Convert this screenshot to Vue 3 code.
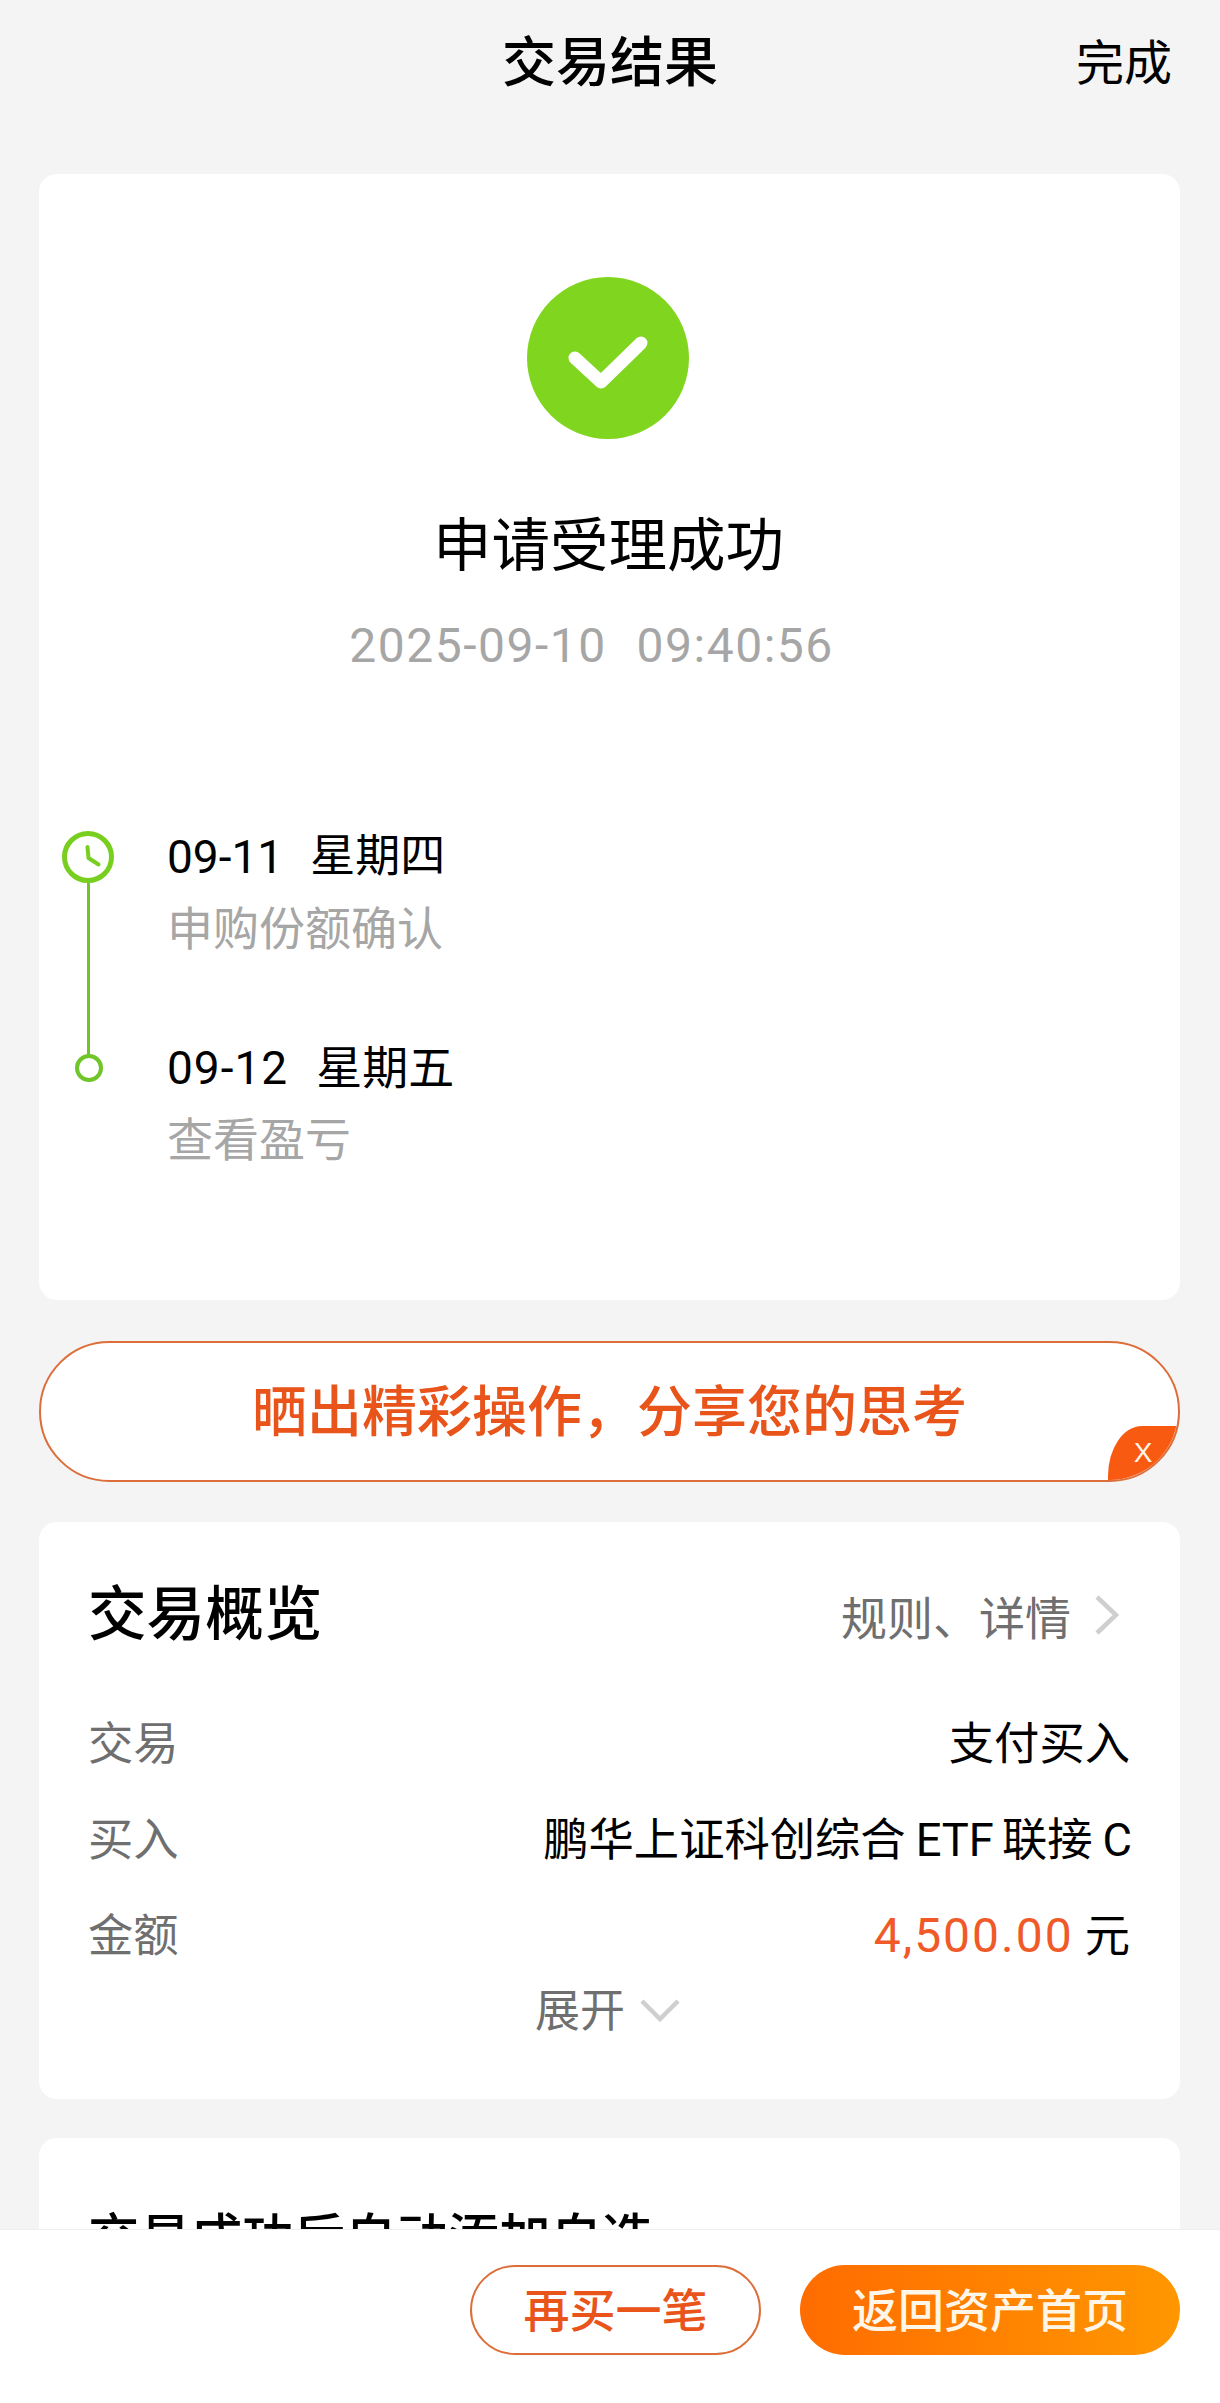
<template>
  <div class="page">
    <div class="scroll">
      <!-- 顶部标题 -->
      <header class="top">
        <h1 class="top-title">交易结果</h1>
        <span class="top-done">完成</span>
      </header>

      <div class="cards">
        <!-- 受理结果 -->
        <section class="card result">
          <svg class="ok-icon" viewBox="0 0 162 162">
            <circle cx="81" cy="81" r="81" fill="#80d51f" />
            <path d="M48 81 L74 105 L114 66" fill="none" stroke="#fff" stroke-width="13" stroke-linecap="round" stroke-linejoin="round" />
          </svg>
          <h2 class="result-title">申请受理成功</h2>
          <div class="result-time"><span>2025-09-10</span><span>09:40:56</span></div>

          <ul class="steps">
            <li v-for="(s, i) in steps" :key="s.date" class="step">
              <div class="marker">
                <div class="dot-wrap">
                  <svg v-if="i === 0" class="clock" viewBox="0 0 52 52">
                    <circle cx="26" cy="26" r="23.5" fill="#fff" stroke="#78cf20" stroke-width="5" />
                    <path d="M25.5 16 L26.5 27 L36.5 33.5" fill="none" stroke="#78cf20" stroke-width="4" stroke-linecap="round" stroke-linejoin="round" />
                  </svg>
                  <span v-else class="dot"></span>
                </div>
                <div v-if="i < steps.length - 1" class="line"></div>
              </div>
              <div class="step-text">
                <div class="step-date"><span class="num">{{ s.date }}</span><span class="week">{{ s.week }}</span></div>
                <div class="step-sub">{{ s.sub }}</div>
              </div>
            </li>
          </ul>
        </section>

        <!-- 分享条 -->
        <div class="share">
          <span class="share-text">晒出精彩操作，分享您的思考</span>
          <span class="share-close">X</span>
        </div>

        <!-- 交易概览 -->
        <section class="card overview">
          <div class="ov-head">
            <h2 class="ov-title">交易概览</h2>
            <div class="ov-link">
              规则、详情
              <svg class="chev-right" viewBox="0 0 27 42">
                <path d="M4 3 L23 21 L4 39" fill="none" stroke="#cfcfcf" stroke-width="4.5" />
              </svg>
            </div>
          </div>
          <div class="ov-rows">
            <div class="ov-row">
              <span class="ov-label">交易</span>
              <span class="ov-value">支付买入</span>
            </div>
            <div class="ov-row">
              <span class="ov-label">买入</span>
              <span class="ov-value">鹏华上证科创综合<i class="latin etf">ETF</i>联接<i class="latin cls">C</i></span>
            </div>
            <div class="ov-row">
              <span class="ov-label">金额</span>
              <span class="ov-value"><em class="amount">4,500.00</em>元</span>
            </div>
          </div>
          <div class="ov-more">
            展开
            <svg class="chev-down" viewBox="0 0 40 24">
              <path d="M2 3 L20 21 L38 3" fill="none" stroke="#cfcfcf" stroke-width="4.5" />
            </svg>
          </div>
        </section>

        <!-- 自动添加自选（被底栏遮住） -->
        <section class="card auto">
          <h2 class="auto-title">交易成功后自动添加自选</h2>
        </section>
      </div>
    </div>

    <!-- 底部按钮 -->
    <footer class="bottom">
      <button class="btn ghost">再买一笔</button>
      <button class="btn solid">返回资产首页</button>
    </footer>
  </div>
</template>

<script setup>
const steps = [
  { date: '09-11', week: '星期四', sub: '申购份额确认' },
  { date: '09-12', week: '星期五', sub: '查看盈亏' },
]
</script>

<style>
html, body { margin: 0; background: #f4f4f4; }
</style>

<style scoped>
.page {
  width: 1220px; height: 2403px;
  display: flex; flex-direction: column;
  background: #f4f4f4; color: #000; overflow: hidden;
  font-family: "Roboto", "Noto Sans CJK SC", sans-serif;
}
h1, h2, ul { margin: 0; padding: 0; font-weight: 400; }
li { list-style: none; }

.scroll { flex: 1; min-height: 0; overflow: hidden; }

.top {
  height: 126px; padding: 2px 48px 0 39px; box-sizing: border-box;
  display: flex; align-items: center; position: relative;
}
.top-title { position: absolute; left: 502px; font-size: 54px; font-weight: 500; line-height: 70px; }
.top-done { margin-left: auto; font-size: 48px; line-height: 70px; }

.cards { padding: 48px 40px 0 39px; display: flex; flex-direction: column; }
.card { background: #fff; border-radius: 18px; }

.result { height: 1126px; padding-top: 103px; box-sizing: border-box; display: flex; flex-direction: column; }
.ok-icon { width: 162px; height: 162px; align-self: center; margin-right: 3px; display: block; }
.result-title { margin-top: 67px; padding-right: 2px; text-align: center; font-size: 58.5px; line-height: 80px; }
.result-time {
  margin-top: 30px; padding-right: 36px; display: flex; justify-content: center; gap: 30px;
  font-size: 48px; line-height: 60px; letter-spacing: 1.5px; color: #a6a6a6;
}

.steps { margin-top: 154px; padding-left: 23px; }
.step { display: flex; height: 211px; }
.marker { width: 52px; display: flex; flex-direction: column; align-items: center; }
.dot-wrap { height: 54px; display: flex; align-items: center; justify-content: center; flex: none; }
.clock { width: 52px; height: 52px; display: block; position: relative; z-index: 1; }
.dot {
  width: 28px; height: 28px; box-sizing: border-box; margin-left: 1px;
  border: 4px solid #70c52a; border-radius: 50%; background: #fff; position: relative; z-index: 1;
}
.line { flex: 1; width: 3px; margin: -1px 0 -14px 1px; background: #70c52a; }
.step-text { margin-left: 53px; }
.step-date { font-size: 46px; line-height: 54px; display: flex; }
.week { margin-left: 27px; font-size: 45px; }
.step:last-child .num { letter-spacing: 1px; }
.step:last-child .week { margin-left: 28px; font-size: 46px; }
.step-sub { margin-top: 18px; font-size: 46px; line-height: 54px; color: #a6a6a6; }

.share {
  margin-top: 41px; height: 141px; box-sizing: border-box;
  border: 2px solid #dd6e3a; border-radius: 71px; background: #fff;
  display: flex; align-items: center; justify-content: center;
  position: relative; overflow: hidden;
}
.share-text { font-size: 55px; font-weight: 500; color: #e8541a; line-height: 68px; }
.share-close {
  position: absolute; right: 0; bottom: 0; width: 70px; height: 54px;
  border-top-left-radius: 34px 50px; background: #f85a12; color: #fff4e8;
  display: flex; align-items: center; justify-content: center;
  font-size: 28px; font-family: "Liberation Sans", sans-serif;
}

.overview { margin-top: 40px; height: 577px; box-sizing: border-box; padding: 60px 50px 0 49px; }
.ov-head { height: 66px; display: flex; align-items: center; justify-content: space-between; }
.ov-title { font-size: 58.6px; font-weight: 500; line-height: 66px; }
.ov-link { display: flex; align-items: center; font-size: 46px; color: #6f6f6f; }
.chev-right { width: 27px; height: 42px; margin-left: 22px; margin-right: 10px; display: block; }
.ov-rows { margin-top: 44px; }
.ov-row {
  height: 96px; display: flex; align-items: center; justify-content: space-between;
  font-size: 45.3px;
}
.ov-label { color: #6f6f6f; }
.ov-value { white-space: nowrap; }
.latin { font-style: normal; margin-left: 10px; }
.etf { margin-right: 8px; }
.cls { margin-right: -2px; }
.amount { font-style: normal; color: #f05a28; font-size: 48px; letter-spacing: 2px; margin-right: 11px; }
.ov-more {
  margin-top: -3px; height: 60px;
  display: flex; align-items: center; justify-content: center; padding-right: 3px;
  font-size: 45px; color: #6f6f6f;
}
.chev-down { width: 40px; height: 24px; margin-left: 15px; margin-top: 6px; display: block; }

.auto { margin-top: 39px; height: 300px; padding: 66px 49px 0; box-sizing: border-box; }
.auto-title { font-size: 51.4px; font-weight: 500; line-height: 70px; }

.bottom {
  flex: none; height: 174px; box-sizing: border-box; padding: 35px 40px 0 0;
  background: #fff; border-top: 1px solid #eeeeee;
  display: flex; justify-content: flex-end; align-items: flex-start; gap: 39px;
}
.btn {
  height: 90px; border-radius: 45px; font-family: inherit; font-size: 46px; font-weight: 500;
  padding: 0 0 6px; box-sizing: border-box;
}
.ghost { width: 291px; background: #fff; border: 2px solid #dd6e3a; color: #e8541a; }
.solid { width: 380px; border: none; background: linear-gradient(90deg, #ff6c00, #ff9700); color: #fff6e8; }
</style>
